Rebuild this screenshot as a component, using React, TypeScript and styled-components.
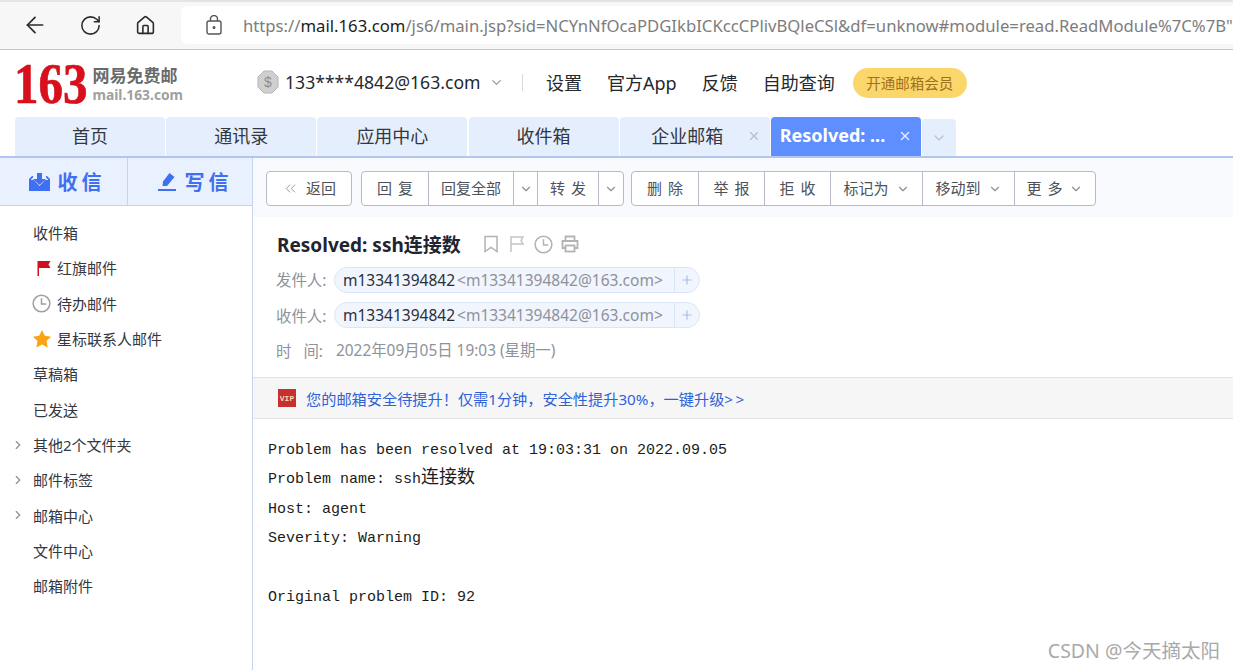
import React from 'react';
import styled, { createGlobalStyle } from 'styled-components';
import { ArrowLeft, RotateCw, House, ChevronDown, ChevronRight, ChevronsLeft, X, Plus } from 'lucide-react';

const UI_FONT = '"Noto Sans", "Noto Sans CJK SC", sans-serif';

const GlobalStyle = createGlobalStyle`
    html, body {
        margin: 0;
        padding: 0;
        background: #ffffff;
    }
    body {
        font-family: ${UI_FONT};
        color: #2b2f38;
    }
    * {
        box-sizing: border-box;
    }
`;

const Page = styled.div`
    position: relative;
    width: 1233px;
    height: 670px;
    overflow: hidden;
    display: flex;
    flex-direction: column;
`;

/* browser chrome */
const BrowserBar = styled.div`
    height: 50px;
    flex: none;
    display: flex;
    align-items: center;
    background: #f7f7f7;
    border-top: 2px solid #e4e4e4;
    border-bottom: 1px solid #c6c6c6;
    padding: 0 0 1px 22px;
`;

const NavButton = styled.div`
    width: 26px;
    height: 26px;
    margin-right: 29px;
    display: flex;
    align-items: center;
    justify-content: center;
    color: #2a2a2a;
`;

const AddressBar = styled.div`
    flex: 1;
    height: 38px;
    margin-left: -6px;
    background: #ffffff;
    border-radius: 6px 0 0 6px;
    display: flex;
    align-items: center;
    padding-left: 25px;
    overflow: hidden;
    white-space: nowrap;
`;

const LockIcon = styled.svg`
    width: 16px;
    height: 20px;
    margin-right: 21px;
    flex: none;
`;

const Url = styled.span`
    font-size: 16.7px;
    color: #7d7d7d;

    b {
        font-weight: 400;
        color: #1d1d1d;
    }
`;

/* mail header */
const MailHeader = styled.div`
    height: 67px;
    flex: none;
    display: flex;
    align-items: center;
    padding: 0 0 3px 14px;
`;

const Logo = styled.div`
    width: 243px;
    flex: none;
    display: flex;
    align-items: center;
    gap: 5px;
    margin-top: 3px;
`;

const LogoNumber = styled.span`
    font-family: "Liberation Serif", serif;
    font-weight: 700;
    font-size: 49px;
    line-height: 38px;
    color: #d80f1c;
    transform: scaleY(1.18);
    transform-origin: center;
    -webkit-text-stroke: 0.6px #d80f1c;
`;

const LogoText = styled.div`
    display: flex;
    flex-direction: column;
    gap: 2px;
    color: #7b7b7b;
`;

const LogoName = styled.span`
    font-size: 17px;
    line-height: 19px;
    font-weight: 700;
    color: #6a6a6a;
`;

const LogoDomain = styled.span`
    font-size: 13.8px;
    line-height: 15px;
    font-weight: 700;
    color: #a0a0a0;
`;

const Account = styled.div`
    display: flex;
    align-items: center;
    font-size: 17.6px;
    color: #25282e;
    width: 265px;
    flex: none;

    svg.coin {
        margin-right: 6px;
    }
    svg.caret {
        margin-left: 8px;
        color: #9a9a9a;
    }
`;

const HeaderDivider = styled.div`
    width: 1px;
    height: 17px;
    background: #d8d8d8;
    margin-right: 23px;
`;

const HeaderLink = styled.a`
    font-size: 18px;
    color: #25282e;
    margin-right: 25px;
    white-space: nowrap;
`;

const VipPill = styled.div`
    width: 114px;
    height: 30px;
    border-radius: 15px;
    background: #fbd66a;
    color: #a0701a;
    font-size: 14.5px;
    display: flex;
    align-items: center;
    justify-content: center;
    margin-left: -7px;
    margin-top: 1px;
`;

/* tabs */
const TabBar = styled.div`
    height: 41px;
    flex: none;
    display: flex;
    align-items: flex-end;
    padding-left: 15px;
    gap: 1.2px;
    border-bottom: 2px solid #b0c6ee;
`;

const Tab = styled.div<{ $active?: boolean }>`
    position: relative;
    width: 150px;
    height: 39px;
    border-radius: 4px 4px 0 0;
    background: ${({ $active }) => ($active ? '#5f8fff' : '#e5eefd')};
    color: ${({ $active }) => ($active ? '#ffffff' : '#33373f')};
    font-size: 18px;
    font-weight: ${({ $active }) => ($active ? 700 : 400)};
    display: flex;
    align-items: center;
    justify-content: center;
    padding-bottom: 3px;
`;

const TabLabel = styled.span<{ $inset?: number }>`
    margin-right: ${({ $inset }) => $inset ?? 0}px;
    white-space: nowrap;
`;

const TabClose = styled.span<{ $active?: boolean }>`
    position: absolute;
    right: 9px;
    top: 12px;
    display: flex;
    color: ${({ $active }) => ($active ? '#e4ecff' : '#b9bec8')};
`;

const TabMore = styled.div`
    width: 34px;
    height: 37px;
    border-radius: 4px 4px 0 0;
    background: #e5eefd;
    color: #b7c2d6;
    display: flex;
    align-items: center;
    justify-content: center;
`;

/* body */
const Content = styled.div`
    flex: 1;
    display: flex;
    min-height: 0;
`;

const Sidebar = styled.aside`
    width: 253px;
    flex: none;
    border-right: 1px solid #c3d3f3;
    display: flex;
    flex-direction: column;
`;

const ActionRow = styled.div`
    height: 48px;
    flex: none;
    display: flex;
    background: #e9f1fe;
    border-bottom: 1px solid #c3d3f3;
`;

const ActionButton = styled.div<{ $width: number }>`
    width: ${({ $width }) => $width}px;
    display: flex;
    align-items: center;
    justify-content: center;
    gap: 8px;
    padding-left: 7px;
    color: #3f6ff2;
    font-size: 20px;
    font-weight: 700;
    letter-spacing: 4px;

    & + & {
        border-left: 1px solid #c3d3f3;
        padding-left: 9px;
    }
`;

const FolderList = styled.ul`
    list-style: none;
    margin: 0;
    padding: 9px 0 0;
`;

const Folder = styled.li`
    position: relative;
    height: 35.3px;
    display: flex;
    align-items: center;
    padding-left: 33px;
    font-size: 15px;
    color: #33373f;
`;

const FolderIcon = styled.span<{ $indent?: number }>`
    width: 24px;
    flex: none;
    display: flex;
    align-items: center;
    margin-left: -1px;
    margin-right: 1px;
    padding-left: ${({ $indent }) => $indent ?? 0}px;
`;

const Expander = styled.span`
    position: absolute;
    left: 11px;
    top: 11px;
    display: flex;
    color: #8b8f97;
`;

const Main = styled.main`
    flex: 1;
    min-width: 0;
    display: flex;
    flex-direction: column;
`;

const Toolbar = styled.div`
    height: 59px;
    flex: none;
    background: #f9fafe;
    display: flex;
    align-items: flex-start;
    padding: 13px 0 0 13px;
    gap: 9px;
`;

const ButtonGroup = styled.div<{ $tight?: boolean }>`
    height: 35px;
    display: flex;
    background: #ffffff;
    border: 1px solid #b7bac9;
    border-radius: 4px;
    margin-left: ${({ $tight }) => ($tight ? '-2px' : '0')};
`;

const ToolButton = styled.div<{ $width: number }>`
    width: ${({ $width }) => $width}px;
    display: flex;
    align-items: center;
    justify-content: center;
    gap: 7px;
    padding-bottom: 3px;
    font-size: 15px;
    word-spacing: 2px;
    color: #4d5159;
    white-space: nowrap;

    & + & {
        border-left: 1px solid #b7bac9;
    }
    svg {
        color: #8c8f98;
        flex: none;
        margin-top: 3px;
    }
`;

const MailHead = styled.div`
    height: 160px;
    flex: none;
    padding: 12px 0 0 24px;
`;

const SubjectRow = styled.div`
    display: flex;
    align-items: center;
    height: 30px;
    margin-bottom: 3px;
`;

const Subject = styled.h1`
    margin: 0 21px 0 0;
    font-size: 19px;
    font-weight: 700;
    color: #1f2430;
`;

const SubjectIcons = styled.div`
    display: flex;
    align-items: center;
    gap: 8px;
`;

const MetaRow = styled.div`
    height: 35.5px;
    display: flex;
    align-items: center;
    font-size: 15.4px;
    color: #8d929b;
`;

const MetaLabel = styled.span<{ $wide?: boolean }>`
    width: ${({ $wide }) => ($wide ? '60px' : '57px')};
    flex: none;
    white-space: pre;
    margin-left: -1px;
    margin-right: 1px;
`;

const MetaValue = styled.span`
    margin-top: -3px;
    margin-left: -1px;
`;

const AddressPill = styled.div`
    width: 366px;
    height: 26px;
    border: 1px solid #dce5f7;
    border-radius: 13px;
    background: #f1f5fd;
    display: flex;
    align-items: center;
    padding-left: 8px;
    font-size: 15.5px;
    white-space: nowrap;
`;

const PillName = styled.span`
    color: #2b2f38;
`;

const PillMail = styled.span`
    color: #8d929b;
    flex: 1;
    margin-left: 2px;
`;

const PillAdd = styled.span`
    width: 25px;
    height: 100%;
    flex: none;
    border-left: 1px solid #dce5f7;
    display: flex;
    align-items: center;
    justify-content: center;
    color: #a9bce6;
`;

const Banner = styled.div`
    height: 42px;
    flex: none;
    background: #f6f6f6;
    border-top: 1px solid #e3e3e3;
    border-bottom: 1px solid #e3e3e3;
    display: flex;
    align-items: center;
    padding-left: 25px;
    gap: 10px;
    font-size: 15.2px;
    color: #2f62d9;
`;

const VipBadge = styled.span`
    width: 18px;
    height: 18px;
    background: #c6302f;
    color: #f4d9b8;
    font-family: "Liberation Mono", monospace;
    font-size: 8px;
    font-weight: 700;
    display: flex;
    align-items: center;
    justify-content: center;
`;

const MailBody = styled.div`
    padding: 17px 0 0 15px;
    font-family: "Liberation Mono", "Noto Sans CJK SC", monospace;
    font-size: 15px;
    line-height: 29.4px;
    color: #1c1c1c;
`;

const BodyLine = styled.div`
    height: 29.4px;
    white-space: pre;
`;

const BodyCjk = styled.span`
    font-size: 18px;
    line-height: 1;
`;

const Watermark = styled.div`
    position: absolute;
    right: 13px;
    bottom: 6px;
    font-size: 19.5px;
    line-height: 26px;
    color: #a9a9a9;
`;

const tabs = ['首页', '通讯录', '应用中心', '收件箱'];
const folders = ['草稿箱', '已发送'];
const groupOne = [
    { label: '回 复', width: 66 },
    { label: '回复全部', width: 85 },
    { icon: true, width: 24 },
    { label: '转 发', width: 61 },
    { icon: true, width: 25 },
];
const groupTwo = [
    { label: '删 除', width: 66 },
    { label: '举 报', width: 66 },
    { label: '拒 收', width: 66 },
    { label: '标记为', width: 92, caret: true },
    { label: '移动到', width: 92, caret: true },
    { label: '更 多', width: 81, caret: true },
];

const Coin = () => (
    <svg className="coin" width="22" height="24" viewBox="0 0 22 24">
        <polygon points="7,1 15,1 21,7 21,17 15,23 7,23 1,17 1,7" fill="#cfcfcf" stroke="#b5b5b5" />
        <text x="11" y="17" textAnchor="middle" fontSize="14" fill="#8e8e8e" fontFamily="Liberation Sans">$</text>
    </svg>
);

const Clock = ({ size, color }: { size: number; color: string }) => (
    <svg width={size} height={size} viewBox="0 0 20 20" fill="none" stroke={color} strokeWidth="1.6">
        <circle cx="10" cy="10" r="8.8" />
        <path d="M10 4.5V10.5H15" />
    </svg>
);

const App = () => {
    return (
        <Page>
            <GlobalStyle />
            <BrowserBar>
                <NavButton><ArrowLeft size={26} strokeWidth={1.6} /></NavButton>
                <NavButton><RotateCw size={23} strokeWidth={1.6} /></NavButton>
                <NavButton><House size={21} strokeWidth={1.8} /></NavButton>
                <AddressBar>
                    <LockIcon viewBox="0 0 16 20" fill="none" stroke="#555" strokeWidth="1.4">
                        <rect x="1" y="6" width="14" height="13" rx="2" />
                        <path d="M4.5 6V4a3.5 3.5 0 0 1 7 0v2" />
                        <circle cx="8" cy="12.5" r="0.8" fill="#555" />
                    </LockIcon>
                    <Url>https://<b>mail.163.com</b>/js6/main.jsp?sid=NCYnNfOcaPDGIkbICKccCPlivBQleCSl&amp;df=unknow#module=read.ReadModule%7C%7B"</Url>
                </AddressBar>
            </BrowserBar>

            <MailHeader>
                <Logo>
                    <LogoNumber>163</LogoNumber>
                    <LogoText>
                        <LogoName>网易免费邮</LogoName>
                        <LogoDomain>mail.163.com</LogoDomain>
                    </LogoText>
                </Logo>
                <Account>
                    <Coin />
                    133****4842@163.com
                    <ChevronDown className="caret" size={15} />
                </Account>
                <HeaderDivider />
                <HeaderLink>设置</HeaderLink>
                <HeaderLink>官方App</HeaderLink>
                <HeaderLink>反馈</HeaderLink>
                <HeaderLink>自助查询</HeaderLink>
                <VipPill>开通邮箱会员</VipPill>
            </MailHeader>

            <TabBar>
                {tabs.map((tab) => <Tab key={tab}><TabLabel>{tab}</TabLabel></Tab>)}
                <Tab>
                    <TabLabel $inset={15}>企业邮箱</TabLabel>
                    <TabClose><X size={14} /></TabClose>
                </Tab>
                <Tab $active>
                    <TabLabel $inset={27}>Resolved: ...</TabLabel>
                    <TabClose $active><X size={14} strokeWidth={2.4} /></TabClose>
                </Tab>
                <TabMore><ChevronDown size={16} /></TabMore>
            </TabBar>

            <Content>
                <Sidebar>
                    <ActionRow>
                        <ActionButton $width={127}>
                            <svg width="21" height="18" viewBox="0 0 21 18" fill="#3f6ff2">
                                <path d="M8 0h5v6h4l-6.5 6L4 6h4z" />
                                <path d="M0 6l3-3h1v1.5L1.5 7H5l5.5 6L16 7h3.5L17 4.5V3h1l3 3v12H0z" />
                            </svg>
                            收信
                        </ActionButton>
                        <ActionButton $width={125}>
                            <svg width="20" height="20" viewBox="0 0 20 20" fill="#3f6ff2">
                                <path d="M12.5 1l5 4-7.5 9H5.5l.5-4.5z" />
                                <rect x="1" y="17" width="18" height="2" />
                            </svg>
                            写信
                        </ActionButton>
                    </ActionRow>
                    <FolderList>
                        <Folder>收件箱</Folder>
                        <Folder>
                            <FolderIcon $indent={3}>
                                <svg width="18" height="18" viewBox="0 0 18 18">
                                    <path d="M2.5 2h13l-2 3.5 2 3.5H4v8H2.5z" fill="#cf1020" />
                                </svg>
                            </FolderIcon>
                            红旗邮件
                        </Folder>
                        <Folder>
                            <FolderIcon><Clock size={19} color="#a0a0a0" /></FolderIcon>
                            待办邮件
                        </Folder>
                        <Folder>
                            <FolderIcon>
                                <svg width="20" height="20" viewBox="0 0 20 20">
                                    <path d="M10 1l2.8 5.8 6.2.9-4.5 4.4 1.1 6.4L10 15.5l-5.6 3 1.1-6.4L1 7.7l6.2-.9z" fill="#fca311" />
                                </svg>
                            </FolderIcon>
                            星标联系人邮件
                        </Folder>
                        {folders.map((folder) => <Folder key={folder}>{folder}</Folder>)}
                        <Folder><Expander><ChevronRight size={14} /></Expander>其他2个文件夹</Folder>
                        <Folder><Expander><ChevronRight size={14} /></Expander>邮件标签</Folder>
                        <Folder><Expander><ChevronRight size={14} /></Expander>邮箱中心</Folder>
                        <Folder>文件中心</Folder>
                        <Folder>邮箱附件</Folder>
                    </FolderList>
                </Sidebar>

                <Main>
                    <Toolbar>
                        <ButtonGroup>
                            <ToolButton $width={84}><ChevronsLeft size={17} strokeWidth={1.3} />返回</ToolButton>
                        </ButtonGroup>
                        <ButtonGroup>
                            {groupOne.map((item, i) => (
                                <ToolButton key={i} $width={item.width}>
                                    {item.icon ? <ChevronDown size={14} /> : item.label}
                                </ToolButton>
                            ))}
                        </ButtonGroup>
                        <ButtonGroup $tight>
                            {groupTwo.map((item) => (
                                <ToolButton key={item.label} $width={item.width}>
                                    {item.label}
                                    {item.caret && <ChevronDown size={14} />}
                                </ToolButton>
                            ))}
                        </ButtonGroup>
                    </Toolbar>

                    <MailHead>
                        <SubjectRow>
                            <Subject>Resolved: ssh连接数</Subject>
                            <SubjectIcons>
                                <svg width="18" height="18" viewBox="0 0 18 18" fill="none" stroke="#b3b3b3" strokeWidth="1.5">
                                    <path d="M3 1.5h12v15l-6-4-6 4z" />
                                </svg>
                                <svg width="18" height="18" viewBox="0 0 18 18" fill="none" stroke="#c4c4c4" strokeWidth="1.5">
                                    <path d="M3 17V2h12l-2 3.5L15 9H3" />
                                </svg>
                                <Clock size={19} color="#b3b3b3" />
                                <svg width="18" height="18" viewBox="0 0 18 18" fill="none" stroke="#b3b3b3" strokeWidth="1.8">
                                    <path d="M4.5 6V1.5h9V6M4.5 13H1.5V6h15v7h-3" />
                                    <rect x="4.5" y="10.5" width="9" height="6" />
                                </svg>
                            </SubjectIcons>
                        </SubjectRow>
                        <MetaRow>
                            <MetaLabel>发件人:</MetaLabel>
                            <AddressPill>
                                <PillName>m13341394842</PillName>
                                <PillMail>&lt;m13341394842@163.com&gt;</PillMail>
                                <PillAdd><Plus size={14} /></PillAdd>
                            </AddressPill>
                        </MetaRow>
                        <MetaRow>
                            <MetaLabel>收件人:</MetaLabel>
                            <AddressPill>
                                <PillName>m13341394842</PillName>
                                <PillMail>&lt;m13341394842@163.com&gt;</PillMail>
                                <PillAdd><Plus size={14} /></PillAdd>
                            </AddressPill>
                        </MetaRow>
                        <MetaRow>
                            <MetaLabel $wide>时   间:</MetaLabel>
                            <MetaValue>2022年09月05日 19:03 (星期一)</MetaValue>
                        </MetaRow>
                    </MailHead>

                    <Banner>
                        <VipBadge>VIP</VipBadge>
                        您的邮箱安全待提升！仅需1分钟，安全性提升30%，一键升级&gt;&#8201;&gt;
                    </Banner>

                    <MailBody>
                        <BodyLine>Problem has been resolved at 19:03:31 on 2022.09.05</BodyLine>
                        <BodyLine>Problem name: ssh<BodyCjk>连接数</BodyCjk></BodyLine>
                        <BodyLine>Host: agent</BodyLine>
                        <BodyLine>Severity: Warning</BodyLine>
                        <BodyLine> </BodyLine>
                        <BodyLine>Original problem ID: 92</BodyLine>
                    </MailBody>
                </Main>
            </Content>
            <Watermark>CSDN @今天摘太阳</Watermark>
        </Page>
    );
};

export default App;
